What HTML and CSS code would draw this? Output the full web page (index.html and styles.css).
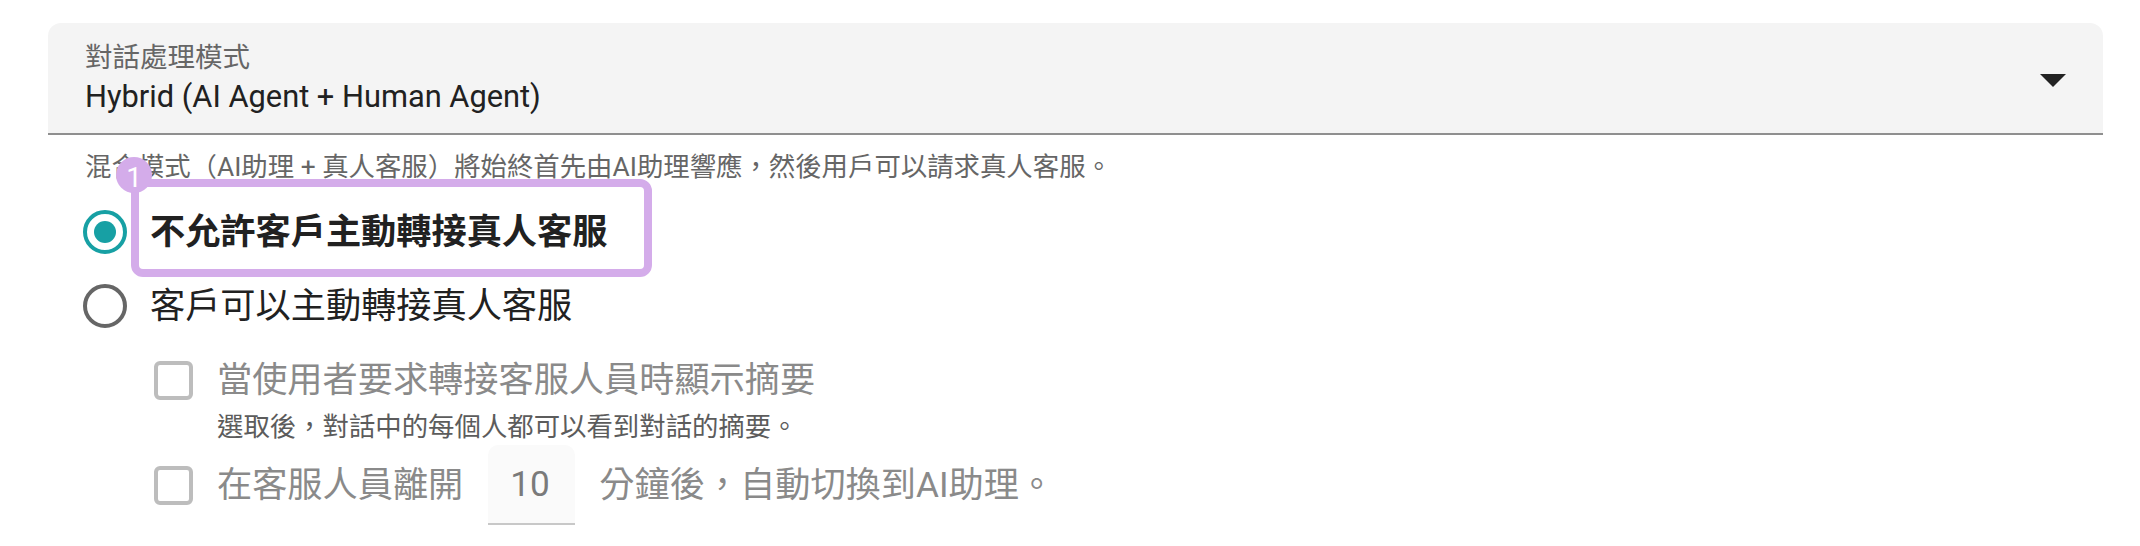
FILE: index.html
```html
<!DOCTYPE html>
<html lang="zh-Hant">
<head>
<meta charset="utf-8">
<title>對話處理模式</title>
<link rel="stylesheet" href="styles.css">
</head>
<body>
<div class="page">
  <div class="select">
    <div class="select-text">
      <div class="select-label">對話處理模式</div>
      <div class="select-value">Hybrid (AI Agent + Human Agent)</div>
    </div>
    <svg class="select-arrow" width="26" height="13" viewBox="0 0 26 13"><path d="M0 0H26L13 13Z" fill="#222"/></svg>
  </div>
  <p class="helper">混合模式（AI助理 + 真人客服）將始終首先由AI助理響應，然後用戶可以請求真人客服。</p>
  <div class="radio-group">
    <div class="radio-row">
      <span class="radio checked"><span class="dot"></span></span>
      <span class="radio-label strong">不允許客戶主動轉接真人客服</span>
      <span class="annot"><span class="badge">1</span></span>
    </div>
    <div class="radio-row">
      <span class="radio"></span>
      <span class="radio-label">客戶可以主動轉接真人客服</span>
    </div>
  </div>
  <div class="options">
    <div class="check-row">
      <span class="checkbox"></span>
      <span class="check-label">當使用者要求轉接客服人員時顯示摘要</span>
    </div>
    <div class="check-help">選取後，對話中的每個人都可以看到對話的摘要。</div>
    <div class="check-row tall">
      <span class="checkbox"></span>
      <span class="check-label">在客服人員離開</span>
      <span class="num-input">10</span>
      <span class="check-label after">分鐘後，自動切換到AI助理。</span>
    </div>
  </div>
</div>
</body>
</html>
```
FILE: styles.css
```css
html, body {
  margin: 0;
  padding: 0;
  background: #ffffff;
}
body {
  font-family: Roboto, "Noto Sans CJK TC", sans-serif;
  color: #212121;
}
.page {
  padding: 23px 37px 0 48px;
}
.select {
  display: flex;
  align-items: flex-start;
  height: 112px;
  box-sizing: border-box;
  background: #f4f4f4;
  border-radius: 13px 13px 0 0;
  border-bottom: 2px solid #8f8f8f;
  padding: 0 37px;
}
.select-text {
  flex: 1;
  padding-top: 19px;
}
.select-label {
  font-size: 27.5px;
  line-height: 31px;
  color: #666666;
}
.select-value {
  margin-top: 6px;
  font-size: 30.8px;
  line-height: 36px;
  color: #212121;
}
.select-arrow {
  margin-top: 51px;
  flex: none;
}
.helper {
  margin: 16px 0 0 37px;
  font-size: 26.4px;
  line-height: 32px;
  color: #666666;
}
.radio-group {
  margin: 12px 0 0 35px;
}
.radio-row {
  position: relative;
  display: flex;
  align-items: center;
  height: 74px;
}
.radio {
  flex: none;
  width: 44px;
  height: 44px;
  box-sizing: border-box;
  border: 4px solid #666666;
  border-radius: 50%;
  display: flex;
  align-items: center;
  justify-content: center;
}
.radio.checked {
  border-color: #17a0a4;
}
.dot {
  width: 22px;
  height: 22px;
  border-radius: 50%;
  background: #17a0a4;
}
.radio-label {
  margin-left: 23px;
  font-size: 35.2px;
  line-height: 44px;
  color: #212121;
}
.radio-label.strong {
  font-weight: 700;
}
.annot {
  position: absolute;
  left: 48px;
  top: -16px;
  width: 521px;
  height: 98px;
  box-sizing: border-box;
  border: 8px solid #d4acea;
  border-radius: 12px;
}
.badge {
  position: absolute;
  left: -23px;
  top: -30px;
  width: 36px;
  height: 36px;
  border-radius: 50%;
  background: #d4acea;
  color: #ffffff;
  font-size: 28px;
  line-height: 42px;
  text-align: center;
}
.options {
  margin: 12px 0 0 106px;
}
.check-row {
  display: flex;
  align-items: center;
  height: 50px;
}
.check-row.tall {
  height: 80px;
  margin-top: 2px;
}
.checkbox {
  flex: none;
  width: 39px;
  height: 39px;
  box-sizing: border-box;
  border: 4px solid #bdbdbd;
  border-radius: 6px;
}
.check-label {
  margin-left: 24px;
  font-size: 35.2px;
  line-height: 44px;
  color: #8a8a8a;
  white-space: nowrap;
}
.check-label.after {
  margin-left: 0;
}
.check-help {
  margin: 6px 0 0 63px;
  font-size: 26.4px;
  line-height: 32px;
  color: #5c5c5c;
}
.num-input {
  flex: none;
  width: 87px;
  height: 80px;
  box-sizing: border-box;
  margin: 0 24px 0 25px;
  padding-left: 22px;
  display: flex;
  align-items: center;
  background: #fafafa;
  border-radius: 10px 10px 0 0;
  border-bottom: 2px solid #c8c8c8;
  font-size: 35.2px;
  color: #7a7a7a;
}
```
